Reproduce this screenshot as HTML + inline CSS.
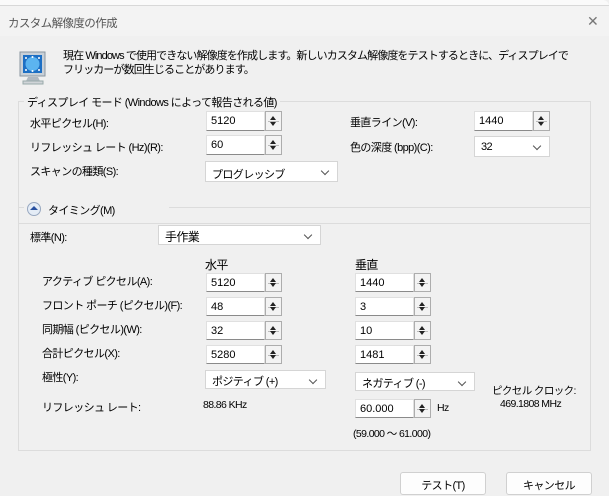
<!DOCTYPE html>
<html><head><meta charset="utf-8"><style>
*{margin:0;padding:0;box-sizing:border-box}
body{width:609px;height:496px;background:#f0f0f0;font-family:"Liberation Sans","Noto Sans CJK JP",sans-serif;font-size:11px;letter-spacing:-0.6px;color:#000;position:relative;overflow:hidden}
.a{position:absolute;white-space:nowrap}
.inp{position:absolute;background:#fff;border:1px solid #e0e0e0;border-bottom:1px solid #8a8a8a;font-size:11px;padding:3px 0 0 4px;letter-spacing:0}
.sp{position:absolute;width:17px;border:1px solid #adadad;background:#f3f3f3}
.sp:before,.sp:after{content:"";position:absolute;left:4px;border-left:3.5px solid transparent;border-right:3.5px solid transparent}
.sp:before{top:4px;border-bottom:4px solid #222}
.sp:after{bottom:4px;border-top:4px solid #222}
.sp i{position:absolute;left:2px;right:2px;top:50%;height:1px;background:#bbb}
.sel{position:absolute;background:#fff;border:1px solid #d5d5d5;padding:4px 0 0 6px}
.sel:after{content:"";position:absolute;right:9px;top:6px;width:5px;height:5px;border-right:1px solid #555;border-bottom:1px solid #555;transform:rotate(45deg)}
.grp{position:absolute;border:1px solid #dcdcdc}
.btn{position:absolute;background:#fdfdfd;border:1px solid #d0d0d0;border-radius:3px;text-align:center;padding-top:4px}
</style></head><body>
<div class="a" style="left:0;top:0;width:609px;height:6px;background:#fafafa;border-bottom:1px solid #d8d8d8;border-radius:0 8px 0 0"></div>
<div class="a" style="left:0;top:6px;width:609px;height:30px;background:#f3f3f3"></div>
<div class="a" style="left:8px;top:15px;color:#555;font-size:11.5px">カスタム解像度の作成</div>
<div class="a" style="left:587px;top:13px;color:#777;font-size:14px">✕</div>

<svg class="a" style="left:18px;top:50px" width="30" height="36" viewBox="0 0 30 36">
<rect x="2" y="2" width="25" height="24" fill="#c8d0d8" stroke="#8a96a0"/>
<rect x="5" y="5" width="19" height="18" fill="#1d6fc4"/>
<circle cx="14.5" cy="14" r="7" fill="#5cb4f0"/>
<circle cx="8" cy="8" r="1" fill="#fff"/><circle cx="21" cy="8" r="1" fill="#fff"/><circle cx="8" cy="20" r="1" fill="#fff"/><circle cx="21" cy="20" r="1" fill="#fff"/><circle cx="14.5" cy="7" r="1" fill="#fff"/><circle cx="14.5" cy="21" r="1" fill="#fff"/>
<path d="M10 27h10l2 4H8z" fill="#b0b8c0"/><rect x="5" y="31" width="20" height="3" fill="#d0d4d8" stroke="#9aa"/>
</svg>
<div class="a" style="left:63px;top:49px;line-height:14px;letter-spacing:-0.9px">現在 Windows で使用できない解像度を作成します。新しいカスタム解像度をテストするときに、ディスプレイで<br>フリッカーが数回生じることがあります。</div>

<div class="grp" style="left:18px;top:101px;width:573px;height:123px"></div>
<div class="a" style="left:24px;top:94px;background:#f0f0f0;padding:0 3px">ディスプレイ モード (Windows によって報告される値)</div>
<div class="a" style="left:30px;top:115px">水平ピクセル(H):</div>
<div class="inp" style="left:206px;top:111px;width:59px;height:20px">5120</div><div class="sp" style="left:265px;top:111px;height:20px"><i></i></div>
<div class="a" style="left:350px;top:114px">垂直ライン(V):</div>
<div class="inp" style="left:474px;top:111px;width:59px;height:20px">1440</div><div class="sp" style="left:533px;top:111px;height:20px"><i></i></div>
<div class="a" style="left:30px;top:139px">リフレッシュ レート (Hz)(R):</div>
<div class="inp" style="left:206px;top:135px;width:59px;height:20px">60</div><div class="sp" style="left:265px;top:135px;height:20px"><i></i></div>
<div class="a" style="left:350px;top:139px">色の深度 (bpp)(C):</div>
<div class="sel" style="left:474px;top:136px;width:76px;height:21px">32</div>
<div class="a" style="left:30px;top:163px">スキャンの種類(S):</div>
<div class="sel" style="left:205px;top:161px;width:133px;height:21px">プログレッシブ</div>

<div class="grp" style="left:18px;top:207px;width:573px;height:244px"></div>
<div class="a" style="left:24px;top:201px;width:145px;height:14px;background:#f0f0f0"></div>
<div class="a" style="left:27px;top:202px;width:14px;height:14px;border-radius:50%;border:1px solid #98a8c0;background:#e4ecf6"></div>
<div class="a" style="left:30px;top:206px;border-left:4px solid transparent;border-right:4px solid transparent;border-bottom:4px solid #2850a0"></div>
<div class="a" style="left:48px;top:202px">タイミング(M)</div>
<div class="a" style="left:30px;top:229px">標準(N):</div>
<div class="sel" style="left:158px;top:225px;width:163px;height:20px;font-size:12px;padding-top:2px">手作業</div>
<div class="a" style="left:205px;top:256px;font-size:12px">水平</div>
<div class="a" style="left:355px;top:256px;font-size:12px">垂直</div>
<div class="a" style="left:42px;top:273px">アクティブ ピクセル(A):</div>
<div class="inp" style="left:206px;top:273px;width:59px;height:19px">5120</div><div class="sp" style="left:265px;top:273px;height:19px"><i></i></div>
<div class="inp" style="left:355px;top:273px;width:59px;height:19px">1440</div><div class="sp" style="left:414px;top:273px;height:19px"><i></i></div>
<div class="a" style="left:42px;top:297px">フロント ポーチ (ピクセル)(F):</div>
<div class="inp" style="left:206px;top:297px;width:59px;height:19px">48</div><div class="sp" style="left:265px;top:297px;height:19px"><i></i></div>
<div class="inp" style="left:355px;top:297px;width:59px;height:19px">3</div><div class="sp" style="left:414px;top:297px;height:19px"><i></i></div>
<div class="a" style="left:42px;top:321px">同期幅 (ピクセル)(W):</div>
<div class="inp" style="left:206px;top:321px;width:59px;height:19px">32</div><div class="sp" style="left:265px;top:321px;height:19px"><i></i></div>
<div class="inp" style="left:355px;top:321px;width:59px;height:19px">10</div><div class="sp" style="left:414px;top:321px;height:19px"><i></i></div>
<div class="a" style="left:42px;top:345px">合計ピクセル(X):</div>
<div class="inp" style="left:206px;top:345px;width:59px;height:19px">5280</div><div class="sp" style="left:265px;top:345px;height:19px"><i></i></div>
<div class="inp" style="left:355px;top:345px;width:59px;height:19px">1481</div><div class="sp" style="left:414px;top:345px;height:19px"><i></i></div>
<div class="a" style="left:42px;top:369px">極性(Y):</div>
<div class="sel" style="left:205px;top:370px;width:121px;height:19px;padding-top:2px">ポジティブ (+)</div>
<div class="sel" style="left:355px;top:372px;width:120px;height:19px;padding-top:2px">ネガティブ (-)</div>
<div class="a" style="left:492px;top:383px;font-size:10.5px">ピクセル クロック:</div>
<div class="a" style="left:500px;top:398px;font-size:10.5px">469.1808 MHz</div>
<div class="a" style="left:42px;top:399px">リフレッシュ レート:</div>
<div class="a" style="left:203px;top:399px;font-size:10.5px">88.86 KHz</div>
<div class="inp" style="left:355px;top:399px;width:59px;height:19px">60.000</div><div class="sp" style="left:414px;top:399px;height:19px"><i></i></div>
<div class="a" style="left:437px;top:402px;font-size:10.5px">Hz</div>
<div class="a" style="left:353px;top:426px;font-size:10.5px">(59.000 ～ 61.000)</div>

<div class="btn" style="left:400px;top:472px;width:86px;height:23px">テスト(T)</div>
<div class="btn" style="left:506px;top:472px;width:86px;height:23px">キャンセル</div>
</body></html>
